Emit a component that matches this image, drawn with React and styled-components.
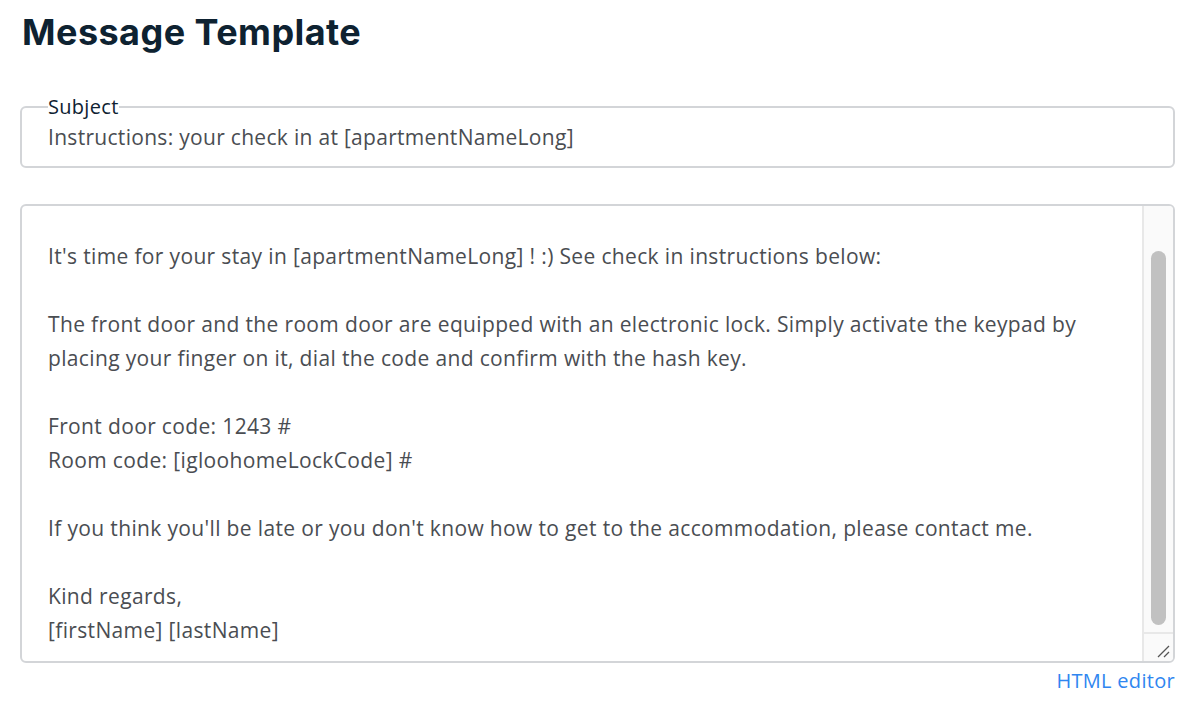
import React from 'react';
import styled, { createGlobalStyle } from 'styled-components';

const GlobalStyle = createGlobalStyle`
    html, body {
        margin: 0;
        padding: 0;
        background: #ffffff;
        font-family: "Open Sans", "Liberation Sans", sans-serif;
    }
`

const lines = [
    "It's time for your stay in [apartmentNameLong] ! :) See check in instructions below:",
    "",
    "The front door and the room door are equipped with an electronic lock. Simply activate the keypad by placing your finger on it, dial the code and confirm with the hash key.",
    "",
    "Front door code: 1243 #",
    "Room code: [igloohomeLockCode] #",
    "",
    "If you think you'll be late or you don't know how to get to the accommodation, please contact me.",
    "",
    "Kind regards,",
    "[firstName] [lastName]",
];

function App() {
    return (
        <Page>
            <GlobalStyle />
            <Title>Message Template</Title>
            <SubjectField>
                <Legend>Subject</Legend>
                <SubjectValue>Instructions: your check in at [apartmentNameLong]</SubjectValue>
            </SubjectField>
            <BodyBox>
                <BodyText>
                    {lines.map((line, i) => (
                        <Line key={i}>{line || '\u00a0'}</Line>
                    ))}
                </BodyText>
                <ScrollTrack>
                    <Thumb />
                    <Resizer>
                        <svg width="14" height="14" viewBox="0 0 14 14">
                            <path d="M2 13 L13 2 M8 13 L13 8" stroke="#555" strokeWidth="1.3" />
                        </svg>
                    </Resizer>
                </ScrollTrack>
            </BodyBox>
            <Footer>
                <EditorLink href="#">HTML editor</EditorLink>
            </Footer>
        </Page>
    )
}

export default App;

const Page = styled.div`
    padding: 10px 15px 0 20px;
    display: flex;
    flex-direction: column;
`

const Title = styled.h1`
    margin: 0 0 0 2px;
    font-family: "Inter", "Open Sans", sans-serif;
    font-weight: 700;
    font-size: 36px;
    line-height: 44px;
    letter-spacing: 0.45px;
    color: #0e2231;
`

const SubjectField = styled.fieldset`
    margin: 42px 0 0 0;
    padding: 0 27px 15px 26px;
    border: 2px solid #d3d5d8;
    border-radius: 6px;
    min-width: 0;
`

const Legend = styled.legend`
    padding: 0;
    font-size: 20px;
    line-height: 22px;
    letter-spacing: 0.3px;
    color: #0e2231;
`

const SubjectValue = styled.div`
    margin-top: 5px;
    font-size: 21px;
    line-height: 28px;
    letter-spacing: 0.3px;
    color: #4a4d52;
`

const BodyBox = styled.div`
    margin-top: 36px;
    height: 455px;
    border: 2px solid #d3d5d8;
    border-radius: 6px;
    display: flex;
    overflow: hidden;
`

const BodyText = styled.div`
    flex: 1;
    padding: 33px 20px 0 26px;
    font-size: 21px;
    line-height: 34px;
    letter-spacing: 0.35px;
    color: #4a4d52;
`

const Line = styled.div`
    white-space: pre-wrap;
`

const ScrollTrack = styled.div`
    width: 29px;
    background: #fafafa;
    border-left: 2px solid #e8e8e8;
    display: flex;
    flex-direction: column;
    align-items: center;
    padding-top: 45px;
`

const Thumb = styled.div`
    width: 15px;
    height: 374px;
    border-radius: 8px;
    background: #c1c1c1;
`

const Resizer = styled.div`
    margin-top: auto;
    width: 100%;
    height: 29px;
    border-top: 2px solid #e8e8e8;
    display: flex;
    align-items: flex-end;
    justify-content: flex-end;
    padding: 0 3px 3px 0;
    box-sizing: border-box;
`

const Footer = styled.div`
    display: flex;
    justify-content: flex-end;
    padding-top: 5px;
`

const EditorLink = styled.a`
    font-size: 20px;
    line-height: 26px;
    letter-spacing: 0.3px;
    color: #2f86f0;
    text-decoration: none;
`
